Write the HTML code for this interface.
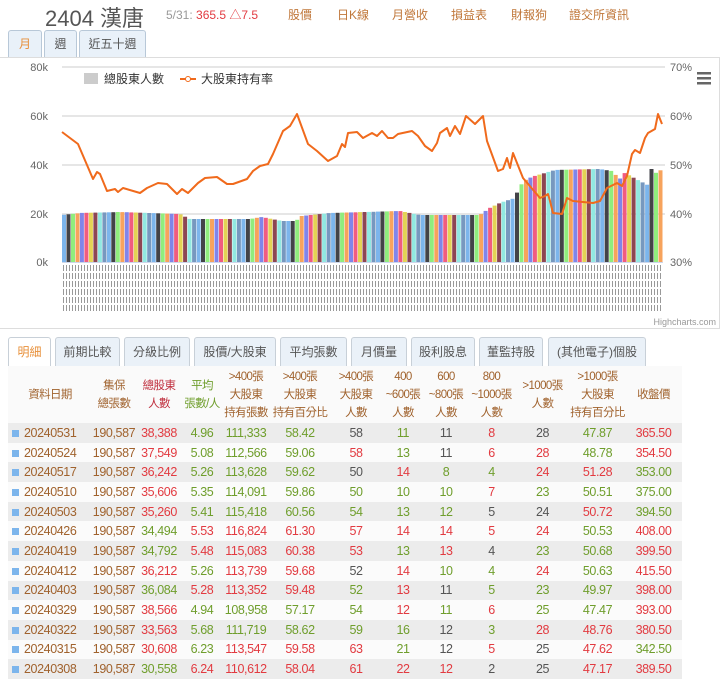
<!DOCTYPE html>
<html><head><meta charset="utf-8">
<style>
*{margin:0;padding:0;box-sizing:border-box}
body{width:720px;height:677px;overflow:hidden;background:#fff;font-family:"Liberation Sans","Noto Sans CJK TC",sans-serif;position:relative}
.abs{position:absolute;white-space:nowrap}
.title{left:45px;top:1px;font-size:22px;color:#555}
.lk{top:6px;font-size:12px;color:#c0773a}
.tab{position:absolute;top:30px;height:27px;border:1px solid #b8c8d8;border-bottom:none;background:#e9f1f9;border-radius:3px 3px 0 0;font-size:12px;color:#555;text-align:center;line-height:26px}
.chart{position:absolute;left:0;top:57px;width:720px;height:272px;border:1px solid #ddd;border-left:none;background:#fff}
.t2{position:absolute;top:337px;height:30px;border:1px solid #c8d0d8;border-bottom:none;background:#eaf1f8;border-radius:3px 3px 0 0;font-size:12px;color:#555;text-align:center;line-height:28px}
table{position:absolute;left:8px;top:366px;width:674px;border-collapse:collapse;font-size:12.5px;table-layout:fixed;letter-spacing:-0.4px}
th{font-weight:normal;color:#a0622d;font-size:11.5px;line-height:18px;height:57px;background:#fafafa;white-space:nowrap;letter-spacing:-0.6px;padding:0}
td{height:19.7px;text-align:center;padding:0;white-space:nowrap}
tr.o td{background:#ececec}
tr.e td{background:#fbfbfb}
.b{color:#a0622d}.r{color:#e23a40}.g{color:#6f9e2c}.k{color:#555}
.sq{display:inline-block;width:7px;height:7px;background:#7cb5ec;margin-right:5px}
</style></head><body>
<div class="abs title">2404 漢唐</div>
<div class="abs" style="left:166px;top:6px;font-size:12px;color:#999">5/31: <span style="color:#e23a40">365.5 △7.5</span></div>
<div class="abs lk" style="left:288px">股價</div>
<div class="abs lk" style="left:337px">日K線</div>
<div class="abs lk" style="left:392px">月營收</div>
<div class="abs lk" style="left:451px">損益表</div>
<div class="abs lk" style="left:511px">財報狗</div>
<div class="abs lk" style="left:569px">證交所資訊</div>
<div class="tab" style="left:8px;width:34px;color:#e8903a">月</div>
<div class="tab" style="left:44px;width:33px">週</div>
<div class="tab" style="left:79px;width:67px">近五十週</div>
<div class="chart">
<svg id="sv" width="720" height="272" viewBox="0 57 720 272" style="position:absolute;left:0;top:0"></svg>
</div>
<div class="t2" style="left:8px;width:43px;color:#e8903a;background:#fff">明細</div>
<div class="t2" style="left:55px;width:65px">前期比較</div>
<div class="t2" style="left:124px;width:66px">分級比例</div>
<div class="t2" style="left:194px;width:82px">股價/大股東</div>
<div class="t2" style="left:280px;width:67px">平均張數</div>
<div class="t2" style="left:351px;width:56px">月價量</div>
<div class="t2" style="left:411px;width:64px">股利股息</div>
<div class="t2" style="left:479px;width:64px">董監持股</div>
<div class="t2" style="left:548px;width:98px">(其他電子)個股</div>
<div style="position:absolute;left:8px;top:366px;width:674px;height:311px;border:1px solid #ddd;border-bottom:none"></div>
<table id="tb">
<colgroup><col style="width:84px"><col style="width:44px"><col style="width:46px"><col style="width:40px"><col style="width:48px"><col style="width:60px"><col style="width:52px"><col style="width:42px"><col style="width:44px"><col style="width:47px"><col style="width:55px"><col style="width:55px"><col style="width:57px"></colgroup>
<tr><th>資料日期</th><th>集保<br>總張數</th><th style="color:#c0303f">總股東<br>人數</th><th style="color:#6f9e2c">平均<br>張數/人</th><th>&gt;400張<br>大股東<br>持有張數</th><th>&gt;400張<br>大股東<br>持有百分比</th><th>&gt;400張<br>大股東<br>人數</th><th>400<br>~600張<br>人數</th><th>600<br>~800張<br>人數</th><th>800<br>~1000張<br>人數</th><th>&gt;1000張<br>人數</th><th>&gt;1000張<br>大股東<br>持有百分比</th><th>收盤價</th></tr>
</table>
<script>
var rows=[
["20240531","38,388","4.96","111,333","58.42","58","11","11","8","28","47.87","365.50","rgggkgkrkgr"],
["20240524","37,549","5.08","112,566","59.06","58","13","11","6","28","48.78","354.50","rgggrgkrrgr"],
["20240517","36,242","5.26","113,628","59.62","50","14","8","4","24","51.28","353.00","rgggkrggrrg"],
["20240510","35,606","5.35","114,091","59.86","50","10","10","7","23","50.51","375.00","rggggggrggg"],
["20240503","35,260","5.41","115,418","60.56","54","13","12","5","24","50.72","394.50","rggggggkkrg"],
["20240426","34,494","5.53","116,824","61.30","57","14","14","5","24","50.53","408.00","grrrrrrrrgr"],
["20240419","34,792","5.48","115,083","60.38","53","13","13","4","23","50.68","399.50","grrrrgrkggr"],
["20240412","36,212","5.26","113,739","59.68","52","14","10","4","24","50.63","415.50","rgrrkrggrgr"],
["20240403","36,084","5.28","113,352","59.48","52","13","11","5","23","49.97","398.00","grrrgrkgggr"],
["20240329","38,566","4.94","108,958","57.17","54","12","11","6","25","47.47","393.00","rggggrgrggr"],
["20240322","33,563","5.68","111,719","58.62","59","16","12","3","28","48.76","380.50","rgggggkgrrr"],
["20240315","30,608","6.23","113,547","59.58","63","21","12","5","25","47.62","342.50","rgrrrgkrkrg"],
["20240308","30,558","6.24","110,612","58.04","61","22","12","2","25","47.17","389.50","grrrrrrkkrr"]];
var h="";rows.forEach(function(r,i){var c=r[12];h+='<tr class="'+(i%2?'e':'o')+'"><td class="b" style="text-align:left;padding-left:4px"><span class="sq"></span>'+r[0]+'</td><td class="b">190,587</td>';for(var j=1;j<12;j++){h+='<td class="'+c[j-1]+'">'+r[j]+'</td>'}h+='</tr>'});
document.getElementById("tb").insertAdjacentHTML("beforeend",h);
var s="";
[66,115,164,213].forEach(function(y){s+='<line x1="62" x2="665" y1="'+y+'" y2="'+y+'" stroke="#ccc"/>'});
[["80k",66],["60k",115],["40k",164],["20k",213],["0k",261]].forEach(function(a){s+='<text x="48" y="'+(a[1]+4)+'" font-size="11" fill="#666" text-anchor="end">'+a[0]+'</text>'});
[["70%",66],["60%",115],["50%",164],["40%",213],["30%",261]].forEach(function(a){s+='<text x="670" y="'+(a[1]+4)+'" font-size="11" fill="#666">'+a[0]+'</text>'});
var bt=[[62,214],[80,212],[120,211],[180,213],[190,218],[250,218],[262,216],[282,220],[296,220],[302,215],[330,212],[400,210],[420,214],[480,214],[490,207],[500,202],[515,197],[520,185],[527,178],[535,175],[555,169],[600,168],[612,170],[620,178],[625,172],[640,180],[650,185],[652,166],[656,172],[663,168]];
function it(p,x){for(var i=1;i<p.length;i++){if(x<=p[i][0]){var a=p[i-1],b=p[i];return a[1]+(b[1]-a[1])*(x-a[0])/(b[0]-a[0])}}return p[p.length-1][1]}
var cols=["#7cb5ec","#434348","#90ed7d","#f7a35c","#8085e9","#f15c80","#e4d354","#8d4653","#91e8e1","#7798bf"];
var N=134,w=601/N;
for(var i=0;i<N;i++){var x=62+i*w,y=it(bt,x+w/2);s+='<rect x="'+x.toFixed(1)+'" y="'+y.toFixed(1)+'" width="'+(w-0.5).toFixed(1)+'" height="'+(261-y).toFixed(1)+'" fill="'+cols[i%10]+'"/>'}
s+='<line x1="62" x2="663" y1="261.5" y2="261.5" stroke="#ccd6eb"/>';
var ln=[[62,131],[78,143],[93,178],[97,171],[100,173],[107,190],[115,188],[118,191],[123,187],[140,192],[147,187],[158,182],[167,183],[177,193],[182,188],[188,192],[198,182],[205,177],[217,176],[227,183],[233,183],[247,178],[253,170],[260,165],[268,163],[273,153],[283,130],[290,125],[297,113],[308,143],[317,150],[328,160],[337,155],[342,143],[345,146],[348,132],[357,131],[363,137],[372,132],[377,135],[382,130],[388,137],[393,137],[398,133],[412,130],[418,135],[425,145],[432,150],[437,142],[440,132],[447,127],[450,135],[455,125],[460,133],[466,115],[475,123],[483,115],[487,140],[498,170],[503,168],[507,157],[510,167],[513,152],[523,177],[540,197],[545,195],[548,193],[550,200],[553,212],[562,213],[567,197],[573,200],[593,202],[600,200],[607,187],[617,182],[622,185],[627,175],[632,153],[635,149],[640,152],[645,137],[648,132],[655,128],[658,113],[662,123]];
s+='<polyline fill="none" stroke="#f06a1c" stroke-width="2" stroke-linejoin="round" points="'+ln.map(function(p){return p.join(",")}).join(" ")+'"/>';
s+='<defs><pattern id="hp" width="3" height="8" patternUnits="userSpaceOnUse"><rect x="0" y="0" width="1" height="6" fill="#999"/></pattern></defs>';
s+='<rect x="62" y="263" width="600" height="48" fill="url(#hp)"/>';
s+='<rect x="84" y="72" width="14" height="11" fill="#ccc"/><text x="104" y="82" font-size="12" fill="#333">總股東人數</text>';
s+='<line x1="180" x2="196" y1="78" y2="78" stroke="#f06a1c" stroke-width="2"/><circle cx="188" cy="78" r="2.5" fill="#fff" stroke="#f06a1c"/><text x="201" y="82" font-size="12" fill="#333">大股東持有率</text>';
s+='<rect x="697" y="71" width="14" height="2.5" fill="#666"/><rect x="697" y="76" width="14" height="2.5" fill="#666"/><rect x="697" y="81" width="14" height="2.5" fill="#666"/>';
s+='<text x="716" y="324" font-size="9" fill="#999" text-anchor="end">Highcharts.com</text>';
document.getElementById("sv").innerHTML=s;
</script>
</body></html>
